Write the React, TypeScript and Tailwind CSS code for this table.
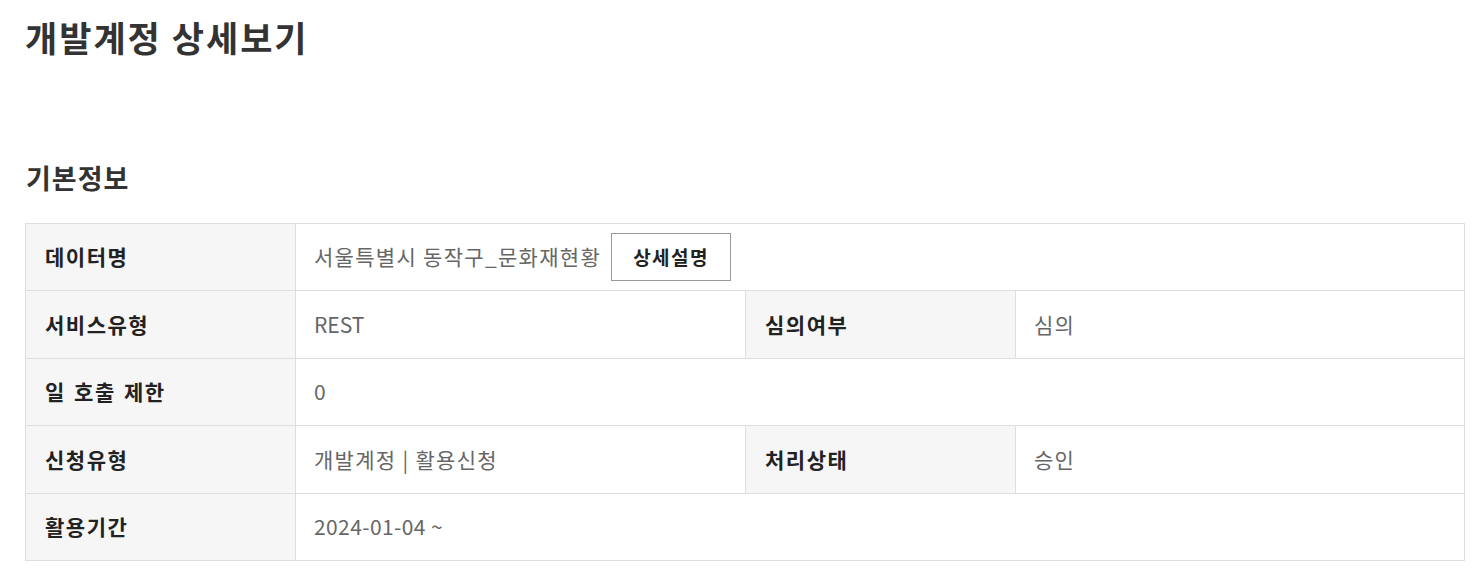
const FONT = "font-['Noto_Sans_CJK_KR','Noto_Sans',sans-serif]"

type Row =
  | { kind: 'wide'; label: string; value: React.ReactNode }
  | { kind: 'pair'; label: string; value: React.ReactNode; label2: string; value2: string }

// latin values read narrower in the original, so drop the hangul tracking there
const Latin = ({ children }: { children: React.ReactNode }) => (
  <span className="tracking-normal">{children}</span>
)

const rows: Row[] = [
  {
    kind: 'wide',
    label: '데이터명',
    value: (
      <div className="flex items-center gap-[10px]">
        <span>서울특별시 동작구_문화재현황</span>
        <button className="w-[120px] h-[48px] border border-[#999] bg-white text-[19px] tracking-[1.5px] font-bold text-[#222]">
          상세설명
        </button>
      </div>
    ),
  },
  { kind: 'pair', label: '서비스유형', value: <Latin>REST</Latin>, label2: '심의여부', value2: '심의' },
  { kind: 'wide', label: '일 호출 제한', value: <Latin>0</Latin> },
  { kind: 'pair', label: '신청유형', value: '개발계정 | 활용신청', label2: '처리상태', value2: '승인' },
  { kind: 'wide', label: '활용기간', value: <span className="tracking-[0.4px]">2024-01-04 ~</span> },
]

const th = 'bg-[#f6f6f6] border border-[#dedede] pl-[19px] text-left text-[21px] tracking-[1.5px] font-bold text-[#222] [word-spacing:2px]'
const td = 'border border-[#dedede] pl-[18px] text-left text-[21px] tracking-[1.3px] text-[#666]'

export default function App() {
  return (
    <div className={`${FONT} w-[1480px] min-h-[572px] bg-white pl-[25px] pt-[13px]`}>
      <h1 className="text-[35px] tracking-[2px] leading-[48px] font-bold text-[#333]">개발계정 상세보기</h1>

      <h2 className="mt-[99px] pl-[1px] text-[27px] tracking-[1px] leading-[36px] font-bold text-[#333]">기본정보</h2>

      <table className="mt-[27px] w-[1440px] border-collapse table-fixed">
        <colgroup>
          <col className="w-[270px]" />
          <col className="w-[450px]" />
          <col className="w-[270px]" />
          <col />
        </colgroup>
        <tbody>
          {rows.map((r) =>
            r.kind === 'wide' ? (
              <tr key={r.label} className="h-[67px]">
                <th className={th}>{r.label}</th>
                <td className={td} colSpan={3}>{r.value}</td>
              </tr>
            ) : (
              <tr key={r.label} className="h-[68px]">
                <th className={th}>{r.label}</th>
                <td className={td}>{r.value}</td>
                <th className={th}>{r.label2}</th>
                <td className={td}>{r.value2}</td>
              </tr>
            )
          )}
        </tbody>
      </table>
    </div>
  )
}
